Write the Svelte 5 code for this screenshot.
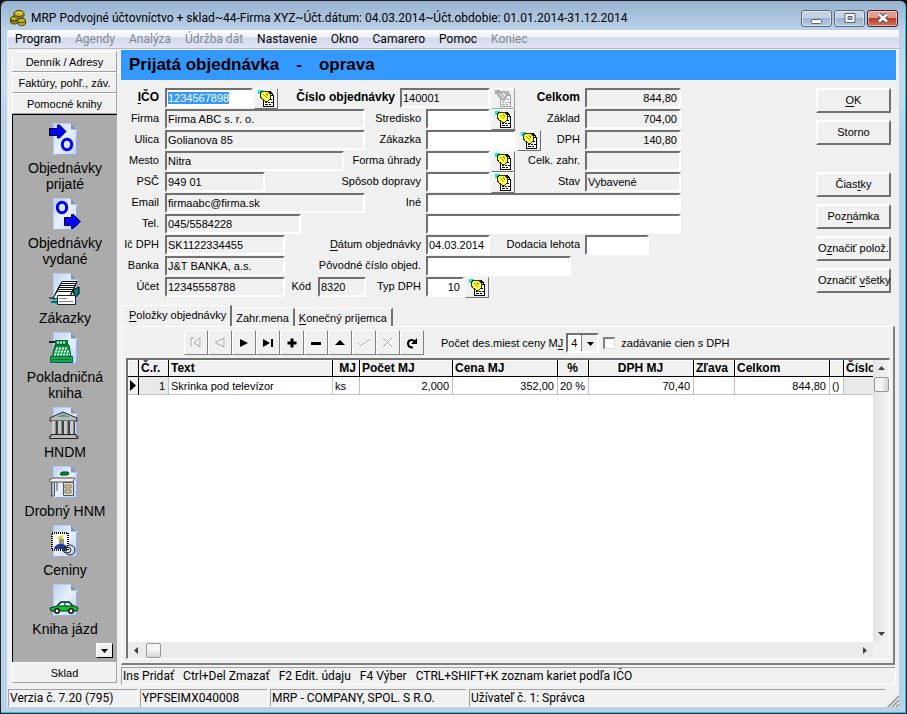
<script lang="ts">
	import { onMount } from 'svelte';

	type Field = { id: string; label: string; value?: string; width: number; ro?: boolean; bold?: boolean; right?: boolean; lookup?: 'on' | 'off' };
	type Row = { left?: Field; extra?: Field; mid?: Field; total?: Field; wide?: boolean };

	const menu = [
		{ label: 'Program' },
		{ label: 'Agendy', disabled: true },
		{ label: 'Analýza', disabled: true },
		{ label: 'Údržba dát', disabled: true },
		{ label: 'Nastavenie' },
		{ label: 'Okno' },
		{ label: 'Camarero' },
		{ label: 'Pomoc' },
		{ label: 'Koniec', disabled: true }
	];

	const books = [
		{ icon: 'in', label: 'Objednávky prijaté' },
		{ icon: 'out', label: 'Objednávky vydané' },
		{ icon: 'cards', label: 'Zákazky' },
		{ icon: 'register', label: 'Pokladničná kniha' },
		{ icon: 'bank', label: 'HNDM' },
		{ icon: 'desk', label: 'Drobný HNM' },
		{ icon: 'stamp', label: 'Ceniny' },
		{ icon: 'car', label: 'Kniha jázd' }
	];

	// "&" marks the accelerator letter
	const rows: Row[] = [
		{
			left: { id: 'ico', label: '&IČO', value: '1234567898', width: 88, bold: true, lookup: 'on' },
			mid: { id: 'cislo', label: 'Číslo objednávky', value: '140001', width: 90, ro: true, bold: true, lookup: 'off' },
			total: { id: 'celkom', label: 'Celkom', value: '844,80', width: 96, ro: true, bold: true, right: true },
			wide: true
		},
		{
			left: { id: 'firma', label: 'Firma', value: 'Firma ABC s. r. o.', width: 200, ro: true },
			mid: { id: 'stredisko', label: 'Stredisko', width: 64, lookup: 'on' },
			total: { id: 'zaklad', label: 'Základ', value: '704,00', width: 96, ro: true, right: true }
		},
		{
			left: { id: 'ulica', label: 'Ulica', value: 'Golianova 85', width: 200, ro: true },
			mid: { id: 'zakazka', label: 'Zákazka', width: 90, lookup: 'on' },
			total: { id: 'dph', label: 'DPH', value: '140,80', width: 96, ro: true, right: true }
		},
		{
			left: { id: 'mesto', label: 'Mesto', value: 'Nitra', width: 179, ro: true },
			mid: { id: 'uhrada', label: 'Forma úhrady', width: 64, lookup: 'on' },
			total: { id: 'zahr', label: 'Celk. zahr.', width: 96, ro: true }
		},
		{
			left: { id: 'psc', label: 'PSČ', value: '949 01', width: 100, ro: true },
			mid: { id: 'doprava', label: 'Spôsob dopravy', width: 64, lookup: 'on' },
			total: { id: 'stav', label: 'Stav', value: 'Vybavené', width: 96, ro: true }
		},
		{
			left: { id: 'email', label: 'Email', value: 'firmaabc@firma.sk', width: 200, ro: true },
			mid: { id: 'ine', label: 'Iné', width: 255 }
		},
		{
			left: { id: 'tel', label: 'Tel.', value: '045/5584228', width: 136, ro: true },
			mid: { id: 'ine2', label: '', width: 255 }
		},
		{
			left: { id: 'icdph', label: 'Ič DPH', value: 'SK1122334455', width: 120, ro: true },
			mid: { id: 'datum', label: '&Dátum objednávky', value: '04.03.2014', width: 64 },
			total: { id: 'lehota', label: 'Dodacia lehota', width: 64 }
		},
		{
			left: { id: 'banka', label: 'Banka', value: 'J&T BANKA, a.s.', width: 120, ro: true },
			mid: { id: 'povodne', label: 'Pôvodné číslo objed.', width: 145 }
		},
		{
			left: { id: 'ucet', label: 'Účet', value: '12345558788', width: 120, ro: true },
			extra: { id: 'kod', label: 'Kód', value: '8320', width: 48, ro: true },
			mid: { id: 'typdph', label: 'Typ DPH', value: '10', width: 38, right: true, lookup: 'on' }
		}
	];

	const actions = [
		['&OK', 'Storno'],
		['Čias&tky', 'Poz&námka', 'O&značiť polož.', 'Označiť &všetky']
	];

	const nav = [
		{ name: 'first', label: 'Prvý', disabled: true },
		{ name: 'prev', label: 'Predchádzajúci', disabled: true },
		{ name: 'next', label: 'Ďalší' },
		{ name: 'last', label: 'Posledný' },
		{ name: 'add', label: 'Pridať' },
		{ name: 'remove', label: 'Zmazať' },
		{ name: 'edit', label: 'Upraviť' },
		{ name: 'post', label: 'Uložiť', disabled: true },
		{ name: 'cancel', label: 'Zrušiť', disabled: true },
		{ name: 'refresh', label: 'Obnoviť' }
	];

	const columns = [
		{ title: '', width: 11, value: '' },
		{ title: 'Č.r.', width: 30, value: '1', align: 'right', fixed: true },
		{ title: 'Text', width: 164, value: 'Skrinka pod televízor' },
		{ title: 'MJ', width: 27, value: 'ks', head: 'right' },
		{ title: 'Počet MJ', width: 93, value: '2,000', align: 'right' },
		{ title: 'Cena MJ', width: 105, value: '352,00', align: 'right' },
		{ title: '%', width: 31, value: '20 %', align: 'right', head: 'center' },
		{ title: 'DPH MJ', width: 105, value: '70,40', align: 'right', head: 'center' },
		{ title: 'Zľava', width: 41, value: '' },
		{ title: 'Celkom', width: 95, value: '844,80', align: 'right' },
		{ title: '', width: 14, value: '()' },
		{ title: 'Číslo', width: 0, value: '', fixed: true }
	];

	const tabs = ['&Položky objednávky', 'Zahr.mena', '&Konečný príjemca'];
	let activeTab = $state(0);
	let withTax = $state(false);
	let decimals = $state('4');

	onMount(() => {
		const el = document.getElementById('ico') as HTMLInputElement | null;
		el?.focus();
		el?.select();
	});
</script>

{#snippet accel(text: string)}
	{@const i = text.indexOf('&')}
	{#if i < 0}{text}{:else}{text.slice(0, i)}<u>{text[i + 1]}</u>{text.slice(i + 2)}{/if}
{/snippet}

{#snippet lookup(off: boolean)}
	<button type="button" class="lookup" disabled={off} aria-label="Vybrať zo zoznamu">
		<svg width="17" height="17" viewBox="0 0 17 17" shape-rendering="crispEdges">
			{#if off}
				<path d="M5.500 7.500V16.500H15.500V5.500L12.500 1.500H7.500z" fill="#f8f8f8" stroke="#a0a0a0" />
				<path d="M12.500 1.500v4h3" fill="none" stroke="#a0a0a0" />
				<path d="M0 0h5v2H3v2H0z" fill="#a8a8a8" />
				<path d="M2 3l3-2h5l2 3v4l-2 3H7L4 8 2 6z" fill="#b4b4b4" />
				<path d="M5 4l4 4M8 3l2 3" stroke="#f8f8f8" />
				<path d="M7 12.500h2m1 0h2m1 0h2M7 14.500h3m1 0h2M12 9.500h2" stroke="#a0a0a0" />
			{:else}
				<path d="M5.500 7.500V16.500H15.500V5.500L12.500 1.500H7.500z" fill="#fff" stroke="#000" />
				<path d="M12.500 1.500v4h3" fill="none" stroke="#000" />
				<path d="M0 0h5v2H3v2H0z" fill="#00f0f0" />
				<path d="M2 3l3-2h5l2 3v5l-2 2H7L4 9 2 6z" fill="#ffff50" stroke="#333300" />
				<path d="M5 4l4 4M8 3l2 3" stroke="#999900" />
				<path d="M7 12.500h2m1 0h2m1 0h2M7 14.500h3m1 0h2M12 9.500h2" stroke="#000" />
			{/if}
		</svg>
	</button>
{/snippet}

{#snippet field(f: Field)}
	<input id={f.id} class="field" class:ro={f.ro} class:right={f.right} type="text" value={f.value ?? ''} readonly={f.ro} aria-label={f.label ? undefined : 'Iné, druhý riadok'} style:width="{f.width}px" />
	{#if f.lookup}{@render lookup(f.lookup === 'off')}{/if}
{/snippet}

{#snippet bookIcon(name: string)}
	<svg class="book-icon" width="32" height="32" viewBox="0 0 32 32" aria-hidden="true">
		<path d="M4.500.500H22l6 6V31.500H4.500z" fill="url(#page)" stroke="#b9cbec" />
		<path d="M28 8v24H6" fill="none" stroke="#7f93c4" />
		<path d="M22 0v6.500h6z" fill="#8296b4" />
		{#if name === 'in'}
			<path d="M.500 5.500h8v-3.500h2l6.500 6.500-6.500 6.500h-2v-2.500h-8z" fill="#00f" stroke="#001" />
			<ellipse cx="18" cy="21.500" rx="4.700" ry="5.200" fill="none" stroke="#00f" stroke-width="3" />
		{:else if name === 'out'}
			<ellipse cx="13" cy="9.500" rx="4.700" ry="5.200" fill="none" stroke="#00f" stroke-width="3" />
			<path d="M15.500 19.500h7v-3h2l7 7-7 7h-2v-3h-7z" fill="#00f" stroke="#001" />
		{:else if name === 'cards'}
			<path d="M24 17l6-3v7l-4 4z" fill="#008080" stroke="#001" />
			<path d="M2 24h7v7H5z" fill="#00d8d8" />
			<path d="M0 25h8M2 29h6" stroke="#001" />
			{#each [0, 1, 2, 3, 4, 5] as n (n)}
				<path d="M{13 - n} {8.5 + n * 2}h15l-3 7H{9 - n}z" fill="#fff" stroke="#111" />
			{/each}
			<path d="M8.500 22.500h18v9h-18z" fill="#fff" stroke="#222" />
			<path d="M10 25.500h8M10 28.500h14" stroke="#888" />
		{:else if name === 'register'}
			<path d="M0 10h6" stroke="#222" stroke-width="2" />
			<path d="M6.500 8.500h12v5h-12z" fill="#008a30" stroke="#063" />
			<path d="M8 10.500h9" stroke="#fff" stroke-width="2" stroke-dasharray="2 1" />
			<path d="M6 13h14l2 12H3z" fill="#0c9840" stroke="#053" />
			<path d="M7 16.500h12M6 19.500h14M5 22.500h16" stroke="#d8fff0" stroke-width="2" stroke-dasharray="2 1" />
			<path d="M1.500 24.500h22v6h-22z" fill="#16a84c" stroke="#064" />
			<path d="M3 27.500h19" stroke="#063" />
		{:else if name === 'bank'}
			<path d="M1 11L14 5l14 6v3H1z" fill="#b8bab8" stroke="#222" />
			<path d="M8 10l6-3 7 3z" fill="#4a9c9a" />
			<path d="M3 14h23v13H3z" fill="#3d4542" />
			{#each [3, 9, 15, 21] as x (x)}
				<rect {x} y="14" width="4" height="13" fill="#c8c8c8" />
				<path d="M{x + 3.5} 14v13" stroke="#888" />
			{/each}
			<path d="M2 27.500h25v2h2v2H.500v-2H2z" fill="#bbb" stroke="#222" />
		{:else if name === 'desk'}
			<path d="M11 8l2-2h6l1 2-2 1h-6z" fill="#049828" stroke="#032" />
			<path d="M18 11h5v2h-5z" fill="#e8b800" />
			<path d="M0 14l4-2h22l-2 4H1z" fill="#eee" stroke="#555" />
			<path d="M2.500 16v14h3V16M8 16v9" fill="none" stroke="#555" />
			<path d="M14.500 16.500h10v13h-10z" fill="#ddd" stroke="#555" />
			<path d="M16 19h6v3h-6zM16 24h6v3h-6z" fill="#eac970" stroke="#777" />
		{:else if name === 'stamp'}
			<rect x="3" y="8" width="16" height="17" fill="#fff" stroke="#111" stroke-width="2" stroke-dasharray="1 1" />
			<path d="M5 23c2-5 10-6 13-1v2H5z" fill="#223c9a" />
			<path d="M10 14h5v5h-5z" fill="#998" />
			<path d="M8 12l6-2v4H9z" fill="#efd43a" />
			<ellipse cx="21" cy="25" rx="5" ry="5" fill="none" stroke="#222" />
			<ellipse cx="18" cy="25" rx="4" ry="3" fill="none" stroke="#222" />
		{:else}
			<path d="M8 22l4-4h8l4 4" fill="#b8ffff" stroke="#121" stroke-width="1.500" />
			<path d="M16 18v4" stroke="#121" />
			<path d="M1 24l7-2h18l3 2-1 3H2z" fill="#13c12c" stroke="#031" />
			<circle cx="8" cy="27" r="2.200" fill="#fff" stroke="#111" stroke-width="1.500" />
			<circle cx="22" cy="27" r="2.200" fill="#fff" stroke="#111" stroke-width="1.500" />
		{/if}
	</svg>
{/snippet}

<svg class="defs" width="0" height="0" aria-hidden="true">
	<linearGradient id="page" x1="0" y1="0" x2="1" y2="1">
		<stop offset="0" stop-color="#bcd4f4" />
		<stop offset=".5" stop-color="#e8f0fc" />
		<stop offset="1" stop-color="#bccff2" />
	</linearGradient>
</svg>

<div class="window">
	<header class="titlebar">
		<svg width="16" height="16" viewBox="0 0 16 16" aria-hidden="true">
			<g fill="#c5b41c" stroke="#403a00">
				<path d="M.500 8.500v4c1 2 6 2 7.500 0v-4z" />
				<path d="M.500 10.500c1 2 6 2 7.500 0" fill="none" />
				<ellipse cx="4.500" cy="8.500" rx="4" ry="2.200" />
				<path d="M8 11v3c1 2 6 2 7.500 0v-3z" />
				<ellipse cx="11.500" cy="10.500" rx="4" ry="2.200" />
				<path d="M4 4v2c1 3 9 3 10 0V4z" />
				<ellipse cx="9" cy="3.500" rx="5" ry="3" />
				<path d="M6 3.500c1-1.500 5-1.500 6 0" fill="none" stroke="#f4ea6a" />
			</g>
		</svg>
		<h1>MRP Podvojné účtovníctvo + sklad~44-Firma XYZ~Účt.dátum: 04.03.2014~Účt.obdobie: 01.01.2014-31.12.2014</h1>
		<div class="controls">
			<button type="button" aria-label="Minimalizovať">
				<svg width="12" height="11"><rect x=".5" y="6.500" width="10" height="4" rx="1" fill="#fff" stroke="#5b6478" /></svg>
			</button>
			<button type="button" aria-label="Obnoviť">
				<svg width="12" height="11"><path d="M1 .500h10v9H1z" fill="#fff" stroke="#5b6478" /><path d="M4 3.500h4v3H4z" fill="#9cb4cf" stroke="#5b6478" /></svg>
			</button>
			<button type="button" class="close" aria-label="Zavrieť">
				<svg width="12" height="11"><path d="M2 1.500l8 7M10 1.500l-8 7" stroke="#5b4450" stroke-width="4.500" /><path d="M2 1.500l8 7M10 1.500l-8 7" stroke="#fff" stroke-width="2.600" /></svg>
			</button>
		</div>
	</header>

	<div class="client">
		<nav class="menu">
			{#each menu as item (item.label)}
				<button type="button" disabled={item.disabled}>{item.label}</button>
			{/each}
		</nav>

		<div class="body">
			<aside class="sidebar">
				<button type="button" class="group">Denník / Adresy</button>
				<button type="button" class="group">Faktúry, pohľ., záv.</button>
				<button type="button" class="group">Pomocné knihy</button>
				<div class="books">
					{#each books as book (book.label)}
						<button type="button" class="book">
							{@render bookIcon(book.icon)}
							<span>{book.label}</span>
						</button>
					{/each}
					<button type="button" class="more" aria-label="Ďalšie">
						<svg width="7" height="4"><path d="M0 0h7L3.500 4z" /></svg>
					</button>
				</div>
				<button type="button" class="group">Sklad</button>
			</aside>

			<main>
				<h2><span>Prijatá objednávka</span><span>-</span><span>oprava</span></h2>

				<div class="top">
					<form class="form" onsubmit={(e) => e.preventDefault()}>
						{#each rows as row, r (r)}
							<div class="row">
								{#if row.left}
									<label class="first" class:bold={row.left.bold} for={row.left.id}>{@render accel(row.left.label)}</label>
									{@render field(row.left)}
								{/if}
								{#if row.extra}
									<label class="extra" for={row.extra.id}>{row.extra.label}</label>
									{@render field(row.extra)}
								{/if}
								{#if row.mid}
									<label class="grow" class:bold={row.mid.bold} for={row.mid.id}>{@render accel(row.mid.label)}</label>
									<div class="group-right" class:wide={row.wide}>
										{@render field(row.mid)}
										{#if row.total}
											<label class="grow" class:bold={row.total.bold} for={row.total.id}>{row.total.label}</label>
											<div class="total">{@render field(row.total)}</div>
										{/if}
									</div>
								{/if}
							</div>
						{/each}
					</form>

					<div class="actions">
						{#each actions as group, g (g)}
							<div class="stack">
								{#each group as label (label)}
									<button type="button" class="action">{@render accel(label)}</button>
								{/each}
							</div>
						{/each}
					</div>
				</div>

				<div class="tabs" role="tablist">
					{#each tabs as tab, t (tab)}
						<button type="button" role="tab" aria-selected={activeTab === t} class:active={activeTab === t} onclick={() => (activeTab = t)}>{@render accel(tab)}</button>
					{/each}
				</div>

				<section class="panel">
					<div class="toolbar">
						<div class="nav">
							{#each nav as n (n.name)}
								<button type="button" disabled={n.disabled} aria-label={n.label}>
									<svg width="14" height="14" viewBox="0 0 14 14">
										{#if n.name === 'first'}
											<path d="M3 3v9M12 3v9" stroke="#fff" /><path d="M2 2v9M2 2h3M11 2v9L5 6.500z" fill="none" stroke="#a8a8a8" />
										{:else if n.name === 'prev'}
											<path d="M12 3v9" stroke="#fff" /><path d="M11 2v9L2 6.500z" fill="none" stroke="#a8a8a8" />
										{:else if n.name === 'next'}
											<path d="M3 3l8 4-8 4z" />
										{:else if n.name === 'last'}
											<path d="M2 3l7 4-7 4zM10 3h2v8h-2z" />
										{:else if n.name === 'add'}
											<path d="M5.500 2.500h3v3h3v3h-3v3h-3v-3h-3v-3h3z" />
										{:else if n.name === 'remove'}
											<path d="M2 6h10v3H2z" />
										{:else if n.name === 'edit'}
											<path d="M2 9l5-5 5 5z" />
										{:else if n.name === 'post'}
											<path d="M1 8l3 3 9-7" fill="none" stroke="#fff" stroke-width="2" /><path d="M1 7l3 3 9-7" fill="none" stroke="#a8a8a8" />
										{:else if n.name === 'cancel'}
											<path d="M3 3l9 9M12 3l-9 9" stroke="#fff" stroke-width="2" /><path d="M2 2l9 9M11 2l-9 9" stroke="#a8a8a8" />
										{:else}
											<path d="M8 11.500C4 11.500 3 9 3 7.500C3 4 7 3 10 5.500" fill="none" stroke="#000" stroke-width="2" /><path d="M12 2v6H6z" />
										{/if}
									</svg>
								</button>
							{/each}
						</div>
						<label class="decimals" for="decimals">Počet des.miest ceny M<u>J</u></label>
						<div class="combo">
							<select id="decimals" bind:value={decimals}>
								<option>2</option>
								<option>3</option>
								<option>4</option>
							</select>
							<svg width="7" height="4"><path d="M0 0h7L3.500 4z" /></svg>
						</div>
						<label class="check"><input type="checkbox" bind:checked={withTax} />zadávanie cien s DPH</label>
					</div>

					<div class="grid">
						<div class="cells">
							<table>
								<colgroup>
									{#each columns as col, c (c)}
										<col style:width={col.width ? `${col.width}px` : 'auto'} />
									{/each}
								</colgroup>
								<thead>
									<tr>
										{#each columns as col, c (c)}
											<th class={col.head}>{col.title}</th>
										{/each}
									</tr>
								</thead>
								<tbody>
									<tr>
										{#each columns as col, c (c)}
											<td class={col.align} class:fixed={col.fixed} class:marker={c === 0}>
												{#if c === 0}<svg width="7" height="11"><path d="M1 0l6 5.500L1 11z" /></svg>{:else}{col.value}{/if}
											</td>
										{/each}
									</tr>
								</tbody>
							</table>
						</div>
						<div class="vscroll">
							<button type="button" aria-label="Nahor"><svg width="7" height="4"><path d="M0 4h7L3.500 0z" /></svg></button>
							<span class="thumb"></span>
							<button type="button" class="end" aria-label="Nadol"><svg width="7" height="4"><path d="M0 0h7L3.500 4z" /></svg></button>
						</div>
						<div class="hscroll">
							<button type="button" aria-label="Doľava"><svg width="4" height="7"><path d="M4 0v7L0 3.500z" /></svg></button>
							<span class="thumb"></span>
							<button type="button" class="end" aria-label="Doprava"><svg width="4" height="7"><path d="M0 0v7l4-3.500z" /></svg></button>
						</div>
					</div>
				</section>

				<div class="hints">
					<span>Ins Pridať</span>
					<span>Ctrl+Del Zmazať</span>
					<span>F2 Edit. údaju</span>
					<span>F4 Výber</span>
					<span>CTRL+SHIFT+K zoznam kariet podľa IČO</span>
				</div>
			</main>
		</div>

		<footer class="status">
			<span class="version">Verzia č. 7.20 (795)</span>
			<span class="licence">YPFSEIMX040008</span>
			<span class="company">MRP - COMPANY, SPOL. S R.O.</span>
			<span class="user">Užívateľ č. 1: Správca</span>
			<svg width="12" height="12"><path d="M1 12L12 1M5 12l7-7M9 12l3-3" stroke="#909090" stroke-width="1.500" /></svg>
		</footer>
	</div>
</div>

<style>
	:global(body) {
		margin: 0;
		background: #111;
	}
	.defs {
		position: absolute;
	}
	.window {
		--ui: Roboto, 'Open Sans', sans-serif;
		--sans: 'Liberation Sans', Arial, sans-serif;
		box-sizing: border-box;
		display: flex;
		flex-direction: column;
		height: 100vh;
		min-height: 700px;
		padding: 0 7px 6px 6px;
		border: 1px solid #222;
		border-radius: 7px 7px 0 0;
		box-shadow: inset -1px -1px #24c8e4;
		background: linear-gradient(#98b3d1, #bcd2e9 30px, #c8dbee 90px, #b9d1ea 125px);
		color: #000;
		font: 11px/14px var(--sans);
	}
	button {
		margin: 0;
		padding: 0;
		border: 0;
		background: #f0f0f0;
		color: inherit;
		font: inherit;
	}
	u {
		text-underline-offset: 2px;
	}

	.titlebar {
		display: flex;
		align-items: center;
		height: 29px;
		gap: 5px;
		padding-left: 3px;
		padding-top: 1px;
		box-sizing: border-box;
	}
	.titlebar h1 {
		flex: 1;
		margin: 0;
		padding-top: 4px;
		font: 12px/16px var(--ui);
		white-space: nowrap;
	}
	.titlebar > svg {
		padding-top: 4px;
	}
	.controls {
		display: flex;
		gap: 2px;
		padding: 4px 1px 0 0;
	}
	.controls button {
		width: 31px;
		height: 17px;
		box-sizing: border-box;
		display: flex;
		align-items: center;
		justify-content: center;
		border: 1px solid #56697f;
		border-radius: 3px;
		box-shadow: inset 0 0 0 1px #ffffff80;
		background: linear-gradient(#c3d3e5 45%, #9bb4d0 50%, #b4cbe2);
	}
	.controls .close {
		border-color: #4c1a24;
		background: linear-gradient(#dd9d90 45%, #b83c2c 50%, #d0765c);
	}

	.client {
		flex: 1;
		min-height: 0;
		display: flex;
		flex-direction: column;
		border-left: 1px solid #e8eff7;
		background: #f0f0f0;
	}
	.menu {
		display: flex;
		gap: 14px;
		height: 19px;
		padding: 1px 7px 0;
		box-sizing: border-box;
		border-bottom: 1px solid #b4b8c6;
		background: linear-gradient(#fff, #eef0f8 7px, #d5daeb 8px, #e0e4f3);
		font: 12px/17px var(--ui);
	}
	.menu button {
		background: none;
	}
	.menu button:disabled {
		color: #838795;
	}

	.body {
		flex: 1;
		min-height: 0;
		display: flex;
		gap: 4px;
		padding: 1px 3px 4px 4px;
	}
	.sidebar {
		width: 105px;
		flex: none;
		display: flex;
		flex-direction: column;
		padding: 1px 0 2px;
	}
	.group {
		height: 21px;
		border: 1px solid #a0a0a0;
		border-top-color: #fff;
		border-left-color: #fff;
		font-size: 11px;
		text-align: center;
		white-space: nowrap;
	}
	.books {
		flex: 1;
		display: flex;
		flex-direction: column;
		align-items: center;
		gap: 6px;
		padding-top: 8px;
		border-top: 1px solid #000;
		border-left: 1px solid #000;
		background: #ababab;
		overflow: hidden;
	}
	.book {
		width: 96px;
		display: flex;
		flex-direction: column;
		align-items: center;
		gap: 5px;
		background: none;
		font-size: 14px;
		line-height: 16px;
	}
	.book-icon {
		display: block;
	}
	.more {
		width: 17px;
		height: 17px;
		display: flex;
		align-items: center;
		justify-content: center;
		align-self: flex-end;
		margin: auto 4px 4px 0;
		box-sizing: border-box;
		border: 1px solid #000;
		border-top-color: #fff;
		border-left-color: #fff;
	}

	main {
		flex: 1;
		min-width: 0;
		display: flex;
		flex-direction: column;
	}
	h2 {
		display: flex;
		gap: 17px;
		margin: 0;
		padding-left: 8px;
		background: #39f;
		font: bold 17px/30px var(--sans);
		white-space: nowrap;
	}
	.top {
		display: flex;
		justify-content: space-between;
		padding: 8px 5px 0 0;
	}
	.form {
		width: 560px;
		display: flex;
		flex-direction: column;
		gap: 1px;
	}
	.row {
		display: flex;
		height: 20px;
	}
	label {
		white-space: nowrap;
	}
	.row label {
		line-height: 18px;
		text-align: right;
	}
	.first {
		width: 38px;
		margin-right: 6px;
	}
	.extra {
		width: 26px;
		margin-right: 7px;
	}
	.grow {
		flex: 1;
		margin-right: 5px;
	}
	.bold {
		font-weight: bold;
		font-size: 12px;
	}
	.group-right {
		width: 255px;
		display: flex;
	}
	.group-right.wide {
		width: 281px;
	}
	.total {
		width: 96px;
	}
	.field {
		height: 20px;
		box-sizing: border-box;
		padding: 0 2px 0 1px;
		border: 2px solid #fff;
		border-top-color: #707070;
		border-left-color: #707070;
		border-radius: 0;
		outline: 0;
		background: #fff;
		font: 11px/16px var(--sans);
	}
	.field.ro {
		background: #f0f0f0;
	}
	.field.right {
		text-align: right;
	}
	.field::selection {
		background: #39f;
		color: #fff;
	}
	.lookup {
		width: 24px;
		height: 21px;
		flex: none;
		display: flex;
		align-items: center;
		justify-content: center;
		margin-left: 1px;
		box-sizing: border-box;
		border: 1px solid #707070;
		border-top-color: #fff;
		border-left-color: #fff;
	}
	.lookup:disabled {
		border-color: #fff #a0a0a0 #a0a0a0 #fff;
	}

	.actions {
		display: flex;
		flex-direction: column;
		gap: 27px;
	}
	.stack {
		display: flex;
		flex-direction: column;
		gap: 7px;
	}
	.action {
		width: 75px;
		height: 25px;
		box-sizing: border-box;
		padding-bottom: 2px;
		border: 2px solid #707070;
		border-top-color: #fff;
		border-left-color: #fff;
		white-space: nowrap;
	}

	.tabs {
		display: flex;
		align-items: flex-end;
		height: 21px;
		padding-top: 8px;
	}
	.tabs button {
		height: 18px;
		padding: 0 4px;
		border-top: 1px solid #fff;
		border-right: 2px solid #707070;
	}
	.tabs .active {
		height: 21px;
		padding: 0 4px 3px 7px;
		border-left: 1px solid #fff;
	}

	.panel {
		flex: 1;
		min-height: 0;
		display: flex;
		flex-direction: column;
		gap: 3px;
		margin-right: 1px;
		padding: 3px 3px 4px 4px;
		border: 1px solid #fff;
		border-right: 2px solid #808080;
		border-bottom: 2px solid #808080;
	}
	.toolbar {
		display: flex;
		align-items: center;
		padding-left: 58px;
	}
	.nav {
		display: flex;
	}
	.nav button {
		width: 24px;
		height: 25px;
		display: flex;
		align-items: center;
		justify-content: center;
		box-sizing: border-box;
		border: 1px solid #808080;
		border-top-color: #fff;
		border-left-color: #fff;
	}
	.decimals {
		margin: 0 3px 0 17px;
	}
	.combo {
		position: relative;
		width: 33px;
		height: 20px;
	}
	.combo select {
		appearance: none;
		width: 33px;
		height: 20px;
		box-sizing: border-box;
		padding: 0 3px;
		border: 2px solid #707070;
		border-right-color: #fff;
		border-bottom-color: #fff;
		border-radius: 0;
		background: linear-gradient(to right, #fff 13px, #808080 13px, #808080 14px, #f0f0f0 14px);
		font: 11px/14px var(--sans);
	}
	.combo svg {
		position: absolute;
		top: 9px;
		right: 5px;
		pointer-events: none;
	}
	.check {
		display: flex;
		align-items: center;
		gap: 6px;
		margin-left: 4px;
	}
	.check input {
		appearance: none;
		width: 12px;
		height: 12px;
		box-sizing: border-box;
		margin: 0;
		border: 2px solid #808080;
		border-right: 1px solid #ddd;
		border-bottom: 1px solid #ddd;
		background: #fff;
	}
	.check input:checked {
		background: #000;
	}

	.grid {
		flex: 1;
		min-height: 0;
		display: grid;
		grid-template: 1fr 16px / 1fr 16px;
		border: 2px solid #707070;
		border-right: 1px solid #fff;
		border-bottom: 1px solid #fff;
		background: #f0f0f0;
	}
	.cells {
		overflow: hidden;
		background: #fff;
	}
	table {
		width: 100%;
		border-collapse: separate;
		border-spacing: 0;
		table-layout: fixed;
	}
	th,
	td {
		overflow: hidden;
		box-sizing: border-box;
		padding: 0 3px 0 2px;
		white-space: nowrap;
		text-align: left;
	}
	th {
		height: 17px;
		border-right: 1px solid #000;
		border-bottom: 1px solid #000;
		box-shadow: inset 1px 1px #fff;
		background: #f0f0f0;
		font-size: 12px;
		line-height: 16px;
	}
	td {
		height: 18px;
		border-right: 1px solid #c0c0c0;
		border-bottom: 1px solid #c0c0c0;
	}
	th:last-child,
	td:last-child {
		border-right: 0;
		padding-right: 0;
		text-overflow: clip;
	}
	.right {
		text-align: right;
	}
	.center {
		text-align: center;
	}
	.fixed {
		background: #e9e9e9;
	}
	.marker {
		padding: 0 0 0 1px;
		border-right-color: #000;
		background: #f0f0f0;
	}
	.marker svg {
		display: block;
	}
	.vscroll,
	.hscroll {
		display: flex;
		align-items: center;
		background: #ebebeb;
	}
	.vscroll {
		flex-direction: column;
		background: linear-gradient(to right, #e4e4e4, #f2f2f2);
	}
	.vscroll button,
	.hscroll button {
		width: 16px;
		height: 16px;
		display: flex;
		align-items: center;
		justify-content: center;
		background: none;
		fill: #404040;
	}
	.thumb {
		width: 15px;
		height: 15px;
		box-sizing: border-box;
		border: 1px solid #979797;
		border-radius: 2px;
		background: linear-gradient(to right, #f6f6f6 45%, #d4d4d8);
	}
	.hscroll .thumb {
		margin-left: 2px;
		background: linear-gradient(#f6f6f6 45%, #d4d4d8);
	}
	.vscroll .thumb {
		margin-top: 1px;
	}
	.vscroll .end {
		margin-top: auto;
	}
	.hscroll .end {
		margin-left: auto;
	}

	.hints {
		display: flex;
		gap: 9px;
		margin-top: 2px;
		padding-left: 1px;
		border: 1px solid #a0a0a0;
		border-right-color: #fff;
		border-bottom-color: #fff;
		font: 12px/16px var(--ui);
		white-space: nowrap;
	}
	.status {
		display: flex;
		gap: 2px;
		height: 18px;
		font: 12px/16px var(--ui);
		white-space: nowrap;
	}
	.status span {
		box-sizing: border-box;
		padding-left: 1px;
		border: 1px solid #a0a0a0;
		border-right-color: #fff;
		border-bottom-color: #fff;
	}
	.version {
		width: 130px;
	}
	.licence {
		width: 128px;
	}
	.company {
		width: 197px;
	}
	.status .user {
		flex: 1;
		border-right: 0;
	}
	.status svg {
		align-self: flex-end;
	}
</style>
